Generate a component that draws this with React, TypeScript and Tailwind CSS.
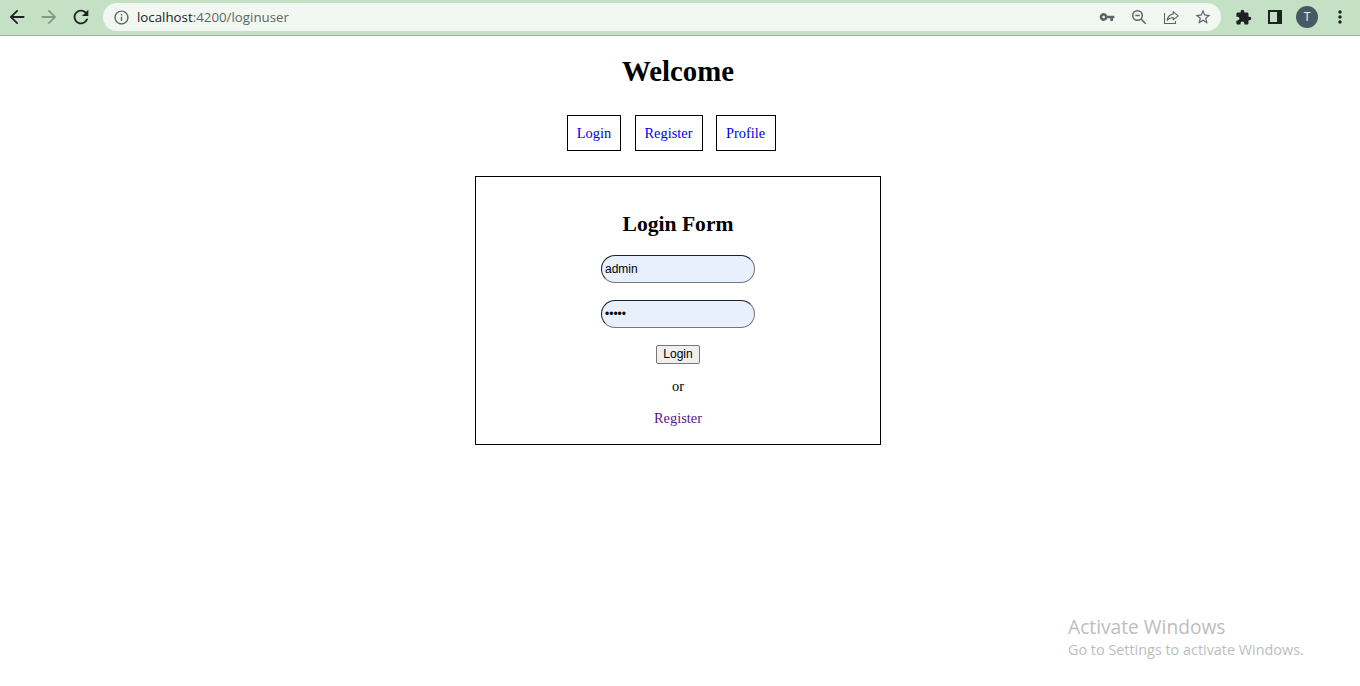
import type { ReactNode } from "react";
import {
  MdArrowBack,
  MdArrowForward,
  MdExtension,
  MdInfoOutline,
  MdMoreVert,
  MdRefresh,
  MdStarBorder,
  MdVpnKey,
} from "react-icons/md";

function Cell({ children }: { children: ReactNode }) {
  return <span className="flex h-7 w-8 shrink-0 items-center justify-center">{children}</span>;
}

function ZoomOutIcon() {
  return (
    <svg width="16" height="16" viewBox="0 0 16 16" fill="none" stroke="currentColor" strokeWidth="1.5">
      <circle cx="6.5" cy="6.5" r="4.8" />
      <path d="M4.3 6.5h4.4M10 10l4.7 4.7" />
    </svg>
  );
}

function ShareIcon() {
  return (
    <svg width="16" height="16" viewBox="0 0 16 16" fill="none" stroke="currentColor" strokeWidth="1.1">
      <path d="M1.5 4v10.500h11v-2.500" />
      <path d="M4.2 11.300c.5-4 2.600-5.800 6-6.200V2.600l4.900 4.200-4.900 4.100V8.500c-2.700.1-4.500.9-6 2.800z" strokeLinejoin="round" />
    </svg>
  );
}

function SidePanelIcon() {
  return (
    <svg width="14" height="14" viewBox="0 0 14 14" fill="currentColor">
      <path fillRule="evenodd" d="M0 0h14v14H0zM2 2v10h7V2z" />
    </svg>
  );
}

function Toolbar() {
  return (
    <header className="flex h-9 items-start border-b border-[#9fb49f] bg-[#c5e1c5] pt-[3px] pl-px font-['Open_Sans',sans-serif] text-[#202124]">
      <Cell><MdArrowBack size={22} /></Cell>
      <Cell><MdArrowForward size={22} className="text-[#859886]" /></Cell>
      <Cell><MdRefresh size={22} /></Cell>
      <div className="ml-1.5 flex h-7 w-[1118px] items-center rounded-full bg-[#f1f8f1] pr-0.5 pl-0.5 text-[#5f6368]">
        <Cell><MdInfoOutline size={17} /></Cell>
        <span className="flex-1 text-[13.3px] leading-7 whitespace-nowrap">
          <span className="text-[#202124]">localhost</span>:4200/loginuser
        </span>
        <Cell><MdVpnKey size={16} className="mb-px" /></Cell>
        <Cell><ZoomOutIcon /></Cell>
        <Cell><ShareIcon /></Cell>
        <Cell><MdStarBorder size={18} /></Cell>
      </div>
      <div className="ml-1.5 flex">
        <Cell><MdExtension size={17} /></Cell>
        <Cell><SidePanelIcon /></Cell>
        <Cell>
          <span className="flex size-[22px] items-center justify-center rounded-full bg-[#455a64] font-['Roboto',sans-serif] text-[12px] leading-none text-[#e4e9eb]">T</span>
        </Cell>
        <Cell><MdMoreVert size={20} className="ml-px" /></Cell>
      </div>
    </header>
  );
}

const navLink = "flex h-9 items-center justify-center border border-black pt-0.5 text-[#0000ee]";
const field =
  "block h-7 w-[154px] rounded-[14px] border border-t-[#222] border-r-[#767676] border-b-[#767676] border-l-[#222] bg-[#e8f0fe] px-[3px] font-['Liberation_Sans',sans-serif] text-[12px] text-black outline-none";

export default function App() {
  return (
    <div className="flex h-[686px] flex-col bg-white font-['Liberation_Serif',serif] text-[14.4px] text-black">
      <Toolbar />
      <main className="flex flex-col items-center pr-1">
        <h1 className="mt-[19px] text-[28.8px] leading-[33px] font-bold">Welcome</h1>
        <nav className="mt-[27px] mr-[13px] flex">
          <a href="#login" className={navLink + " w-[54px]"}>Login</a>
          <a href="#register" className={navLink + " ml-3.5 w-[68px] pr-px"}>Register</a>
          <a href="#profile" className={navLink + " ml-[13px] w-[60px] pr-px"}>Profile</a>
        </nav>
        <form className="mt-[25px] flex h-[269px] w-[406px] flex-col items-center border border-black">
          <h2 className="mt-[35px] text-[21.6px] leading-[25px] font-bold">Login Form</h2>
          <input className={field + " mt-[18px]"} type="text" defaultValue="admin" />
          <input className={field + " mt-[17px]"} type="password" defaultValue="admin" />
          <button type="button" className="mt-[17px] h-[19px] w-11 rounded-[2px] border border-[#767676] bg-[#efefef] font-['Liberation_Sans',sans-serif] text-[12px] leading-[17px]">
            Login
          </button>
          <p className="mt-3.5 leading-4">or</p>
          <a href="#register" className="mt-4 leading-4 text-[#551a8b]">Register</a>
        </form>
      </main>
      <aside className="mt-auto mr-[55px] mb-[26px] w-[237px] self-end font-['Open_Sans',sans-serif] whitespace-nowrap text-[#bdbdbd]">
        <p className="mb-px text-[19.2px] leading-6">Activate Windows</p>
        <p className="text-[14.4px] leading-5">Go to Settings to activate Windows.</p>
      </aside>
    </div>
  );
}
